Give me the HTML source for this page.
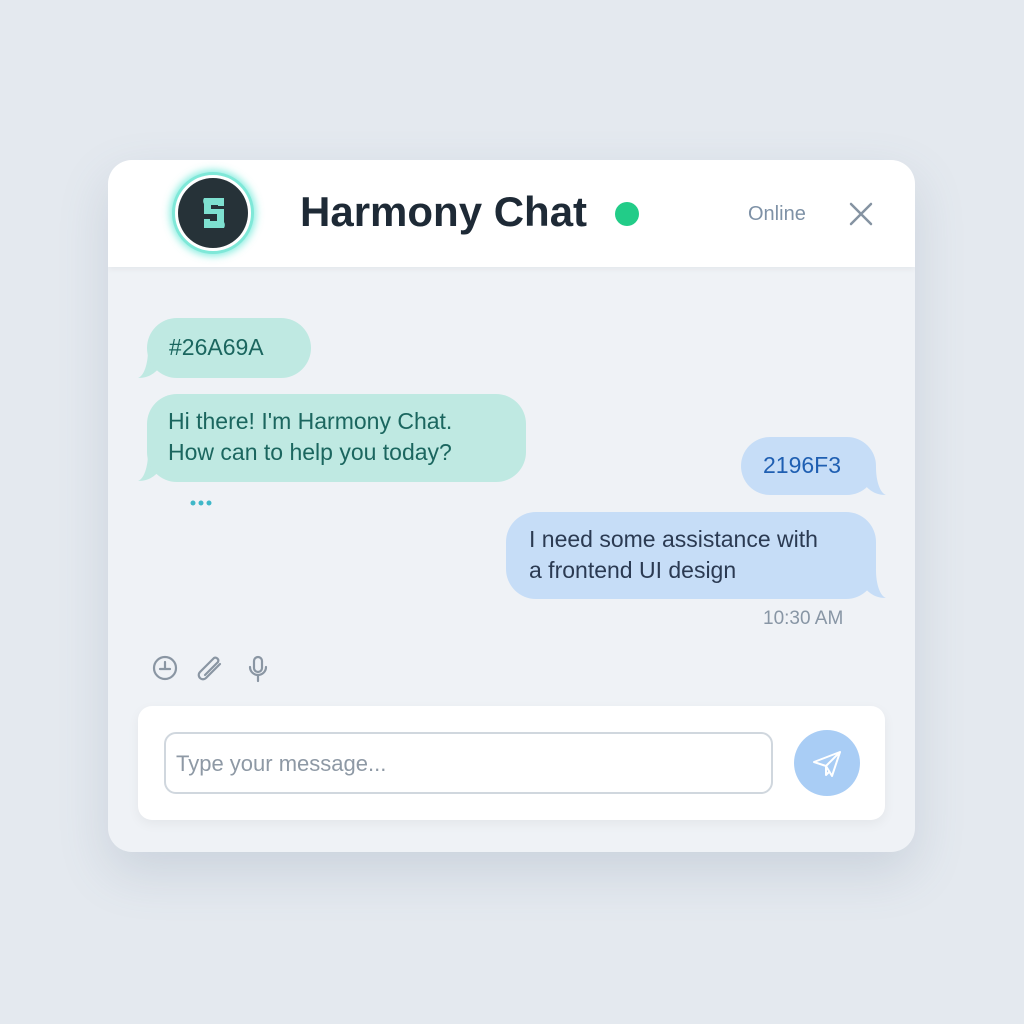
<!DOCTYPE html>
<html><head><meta charset="utf-8"><style>
*{margin:0;padding:0;box-sizing:border-box}
body{width:1024px;height:1024px;background:#e4e9ef;font-family:"Liberation Sans",sans-serif;position:relative;overflow:hidden}
.card{position:absolute;left:108px;top:160px;width:807px;height:692px;border-radius:24px;background:#eff2f6;box-shadow:0 20px 50px rgba(90,110,140,.18);overflow:hidden}
.hdr{position:absolute;left:0;top:0;width:807px;height:107px;background:#fff;box-shadow:0 2px 6px rgba(0,0,0,.05)}
.ab{position:absolute;}
.b{position:absolute;border-radius:30px;font-size:23px;line-height:31px}
.t{background:#bfe9e2;color:#1b665f}
.u{background:#c6ddf7;color:#2b3a52}
</style></head><body>
<div class="card">
<div class="hdr">
 <div class="ab" style="left:64px;top:12px;width:82px;height:82px;border-radius:50%;background:#fff;box-shadow:0 0 8px 2px rgba(80,230,210,.7);border:3px solid #7fe8d8"></div>
 <div class="ab" style="left:70px;top:18px;width:70px;height:70px;border-radius:50%;background:#263238"></div>
 <svg class="ab" style="left:88px;top:35px" width="36" height="36" viewBox="0 0 36 36" fill="#7ee0d0">
  <path d="M8 3h20v7H15v7H8V9a6 6 0 0 1 0-6z"/>
  <path d="M8 14h20v5H8z"/>
  <path d="M28 33H8v-7h13v-7h7v8a6 6 0 0 1 0 6z"/>
  <path d="M8 20h6v12l-6-5z" opacity="0"/>
  <path d="M22 3h6v8h-6z"/>
  <path d="M8 24h6v9H8z"/>
 </svg>
 <div class="ab" style="left:192px;top:28px;font-size:42px;font-weight:bold;color:#1e2a36">Harmony Chat</div>
 <div class="ab" style="left:507px;top:42px;width:24px;height:24px;border-radius:50%;background:#22cc88"></div>
 <div class="ab" style="left:640px;top:43px;font-size:20px;color:#7e91a6">Online</div>
 <svg class="ab" style="left:740px;top:41px" width="26" height="26" viewBox="0 0 26 26"><path d="M3 3L23 23M23 3L3 23" stroke="#8593a2" stroke-width="2.5" stroke-linecap="round"/></svg>
</div>
<svg class="ab" style="left:28px;top:190px" width="30" height="30"><path d="M12 0 C12 14 8 26 2 28 C14 28 22 22 28 10z" fill="#bfe9e2"/></svg>
<div class="b t" style="left:39px;top:158px;width:164px;height:60px;padding:14px 22px">#26A69A</div>
<svg class="ab" style="left:28px;top:293px" width="30" height="30"><path d="M12 0 C12 14 8 26 2 28 C14 28 22 22 28 10z" fill="#bfe9e2"/></svg>
<div class="b t" style="left:39px;top:234px;width:379px;height:88px;padding:12px 21px">Hi there! I'm Harmony Chat.<br>How can to help you today?</div>
<svg class="ab" style="left:81px;top:339px" width="26" height="8"><circle cx="4" cy="4" r="2.5" fill="#3fb7c8"/><circle cx="12" cy="4" r="2.5" fill="#3fb7c8"/><circle cx="20" cy="4" r="2.5" fill="#3fb7c8"/></svg>
<svg class="ab" style="left:750px;top:307px" width="30" height="30"><path d="M18 0 C18 14 22 26 28 28 C16 28 8 22 2 10z" fill="#c6ddf7"/></svg>
<div class="b u" style="left:633px;top:277px;width:135px;height:58px;padding:13px 22px;color:#1f5fb2">2196F3</div>
<svg class="ab" style="left:750px;top:410px" width="30" height="30"><path d="M18 0 C18 14 22 26 28 28 C16 28 8 22 2 10z" fill="#c6ddf7"/></svg>
<div class="b u" style="left:398px;top:352px;width:370px;height:87px;padding:12px 23px">I need some assistance with<br>a frontend UI design</div>
<div class="ab" style="left:655px;top:448px;font-size:19px;color:#8896a5">10:30 AM</div>
<svg class="ab" style="left:44px;top:495px" width="130" height="28" viewBox="0 0 130 28" fill="none" stroke="#8a96a3" stroke-width="2.2" stroke-linecap="round">
 <circle cx="13" cy="13" r="11"/><path d="M13 7v7M8 14h10"/>
 <path d="M68 6L54 20a4 4 0 0 1-6-6L62 0a3 3 0 0 1 4 4L53 17" transform="translate(0,3)"/>
 <rect x="102" y="2" width="8" height="15" rx="4"/><path d="M98 12a8 8 0 0 0 16 0M106 20v6"/>
</svg>
<div class="ab" style="left:30px;top:546px;width:747px;height:114px;background:#fff;border-radius:14px;box-shadow:0 4px 12px rgba(0,0,0,.05)"></div>
<div class="ab" style="left:56px;top:572px;width:609px;height:62px;border:2px solid #d0d7de;border-radius:12px;font-size:22px;color:#8e99a5;padding:17px 10px">Type your message...</div>
<div class="ab" style="left:686px;top:570px;width:66px;height:66px;border-radius:50%;background:#a9cdf5"></div>
<svg class="ab" style="left:704px;top:590px" width="30" height="28" viewBox="0 0 30 28" fill="none" stroke="#fff" stroke-width="2" stroke-linejoin="round"><path d="M2 12L28 2L20 26L14 16z M14 16L28 2 M14 16v9l4-4"/></svg>
</div>
</body></html>
